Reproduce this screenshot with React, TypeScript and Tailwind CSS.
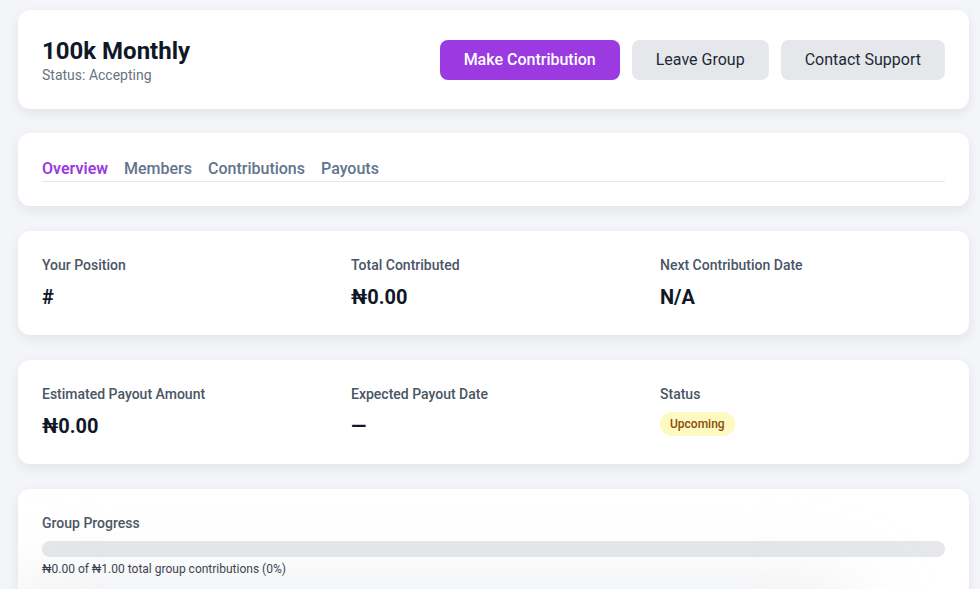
import React from "react";

type Stat = {
  label: string;
  value?: string;
  badge?: string;
};

const topStats: Stat[] = [
  { label: "Your Position", value: "#" },
  { label: "Total Contributed", value: "₦0.00" },
  { label: "Next Contribution Date", value: "N/A" },
];

const payoutStats: Stat[] = [
  { label: "Estimated Payout Amount", value: "₦0.00" },
  { label: "Expected Payout Date", value: "—" },
  { label: "Status", badge: "Upcoming" },
];

const tabs = ["Overview", "Members", "Contributions", "Payouts"];

function StatCard({ stats }: { stats: Stat[] }) {
  return (
    <div className="bg-white rounded-xl shadow-[0_4px_12px_rgba(15,23,42,0.08)] p-6 mb-[25px]">
      <div className="grid grid-cols-3 gap-6">
        {stats.map((s) => (
          <div key={s.label}>
            <div className="text-sm font-medium text-gray-600 leading-5">{s.label}</div>
            {s.badge ? (
              <span className="inline-block mt-2 rounded-full bg-yellow-100 text-yellow-800 text-xs font-medium px-2.5 py-1 leading-4">
                {s.badge}
              </span>
            ) : (
              <div className="mt-2 text-xl font-bold text-gray-900 leading-7">{s.value}</div>
            )}
          </div>
        ))}
      </div>
    </div>
  );
}

export default function App() {
  return (
    <div className="h-screen bg-[#f4f5f9] pt-[10px] pl-[18px] pr-[11px] overflow-hidden font-['Roboto',sans-serif]">
      {/* group header */}
      <div className="bg-white rounded-xl shadow-[0_4px_12px_rgba(15,23,42,0.08)] px-6 pt-[25px] pb-6 mb-[24px] flex items-center justify-between">
        <div>
          <h1 className="text-2xl font-bold text-gray-900 leading-8">100k Monthly</h1>
          <p className="text-sm text-gray-500 leading-5 -mt-0.5">Status: Accepting</p>
        </div>
        <div className="flex gap-3">
          <button className="h-10 px-6 rounded-lg bg-[#9a3ae0] text-white text-base font-medium">
            Make Contribution
          </button>
          <button className="h-10 px-6 rounded-lg bg-gray-200 text-gray-800 text-base">
            Leave Group
          </button>
          <button className="h-10 px-6 rounded-lg bg-gray-200 text-gray-800 text-base">
            Contact Support
          </button>
        </div>
      </div>

      {/* tabs */}
      <div className="bg-white rounded-xl shadow-[0_4px_12px_rgba(15,23,42,0.08)] p-6 mb-[25px]">
        <div className="flex gap-4 border-b border-gray-200">
          {tabs.map((t, i) => (
            <button
              key={t}
              className={
                i === 0
                  ? "text-base leading-6 font-semibold text-[#9a3ae0]"
                  : "text-base leading-6 font-medium text-slate-500"
              }
            >
              {t}
            </button>
          ))}
        </div>
      </div>

      <StatCard stats={topStats} />
      <StatCard stats={payoutStats} />

      {/* progress */}
      <div className="relative bg-white rounded-xl shadow-[0_4px_12px_rgba(15,23,42,0.08)] p-6 overflow-hidden">
        <div className="text-sm font-medium text-gray-600 leading-5">Group Progress</div>
        <div className="mt-2 h-4 rounded-full bg-gray-200">
          <div className="h-4 rounded-full bg-[#9a3ae0]" style={{ width: "0%" }} />
        </div>
        <div className="mt-1 text-xs text-gray-800 leading-4">
          ₦0.00 of ₦1.00 total group contributions (0%)
        </div>
        <div className="h-16" />
        <div className="pointer-events-none absolute -left-4 right-28 top-[100px] h-20 bg-gray-300/50 blur-2xl rounded-full" />
      </div>
    </div>
  );
}
